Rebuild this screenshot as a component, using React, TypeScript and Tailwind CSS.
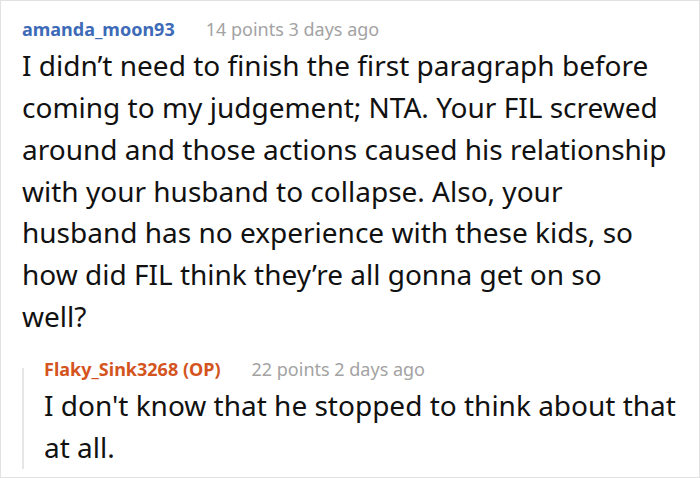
import React from "react";

export default function App() {
  const font = { fontFamily: '"Noto Sans", "Open Sans", sans-serif' };
  return (
    <div className="w-[700px] h-[478px] bg-white overflow-hidden" style={font}>
      <div className="h-[478px] border border-[#e2e2e2] pl-[21px] pr-[8px] pt-[16px] pb-[6px]">
        <div className="flex items-baseline h-[24px] leading-[24px]">
          <span className="text-[18px] font-bold text-[#3d6bb8]">amanda_moon93</span>
          <span className="ml-[31px] text-[18px] text-[#a3a3a3]">14 points 3 days ago</span>
        </div>
        <p className="mt-[4.2px] w-[648px] text-[28px] leading-[41.8px] text-[#111111]">
          I didn’t need to finish the first paragraph before coming to my judgement; NTA. Your FIL screwed around and those actions caused his relationship with your husband to collapse. Also, your husband has no experience with these kids, so how did FIL think they’re all gonna get on so well?
        </p>
        <div className="mt-[19.2px] flex">
          <div className="mt-[11px] w-[2px] bg-[#e6e6e6]" />
          <div className="pl-[20px] flex-1">
            <div className="flex items-baseline h-[24px] leading-[24px]">
              <span className="text-[18px] font-bold text-[#d4541e]">Flaky_Sink3268 (OP)</span>
              <span className="ml-[31px] text-[18px] text-[#a3a3a3]">22 points 2 days ago</span>
            </div>
            <p className="mt-[4.2px] w-[640px] text-[28px] leading-[41.8px] text-[#111111]">
              I don't know that he stopped to think about that at all.
            </p>
          </div>
        </div>
      </div>
    </div>
  );
}
